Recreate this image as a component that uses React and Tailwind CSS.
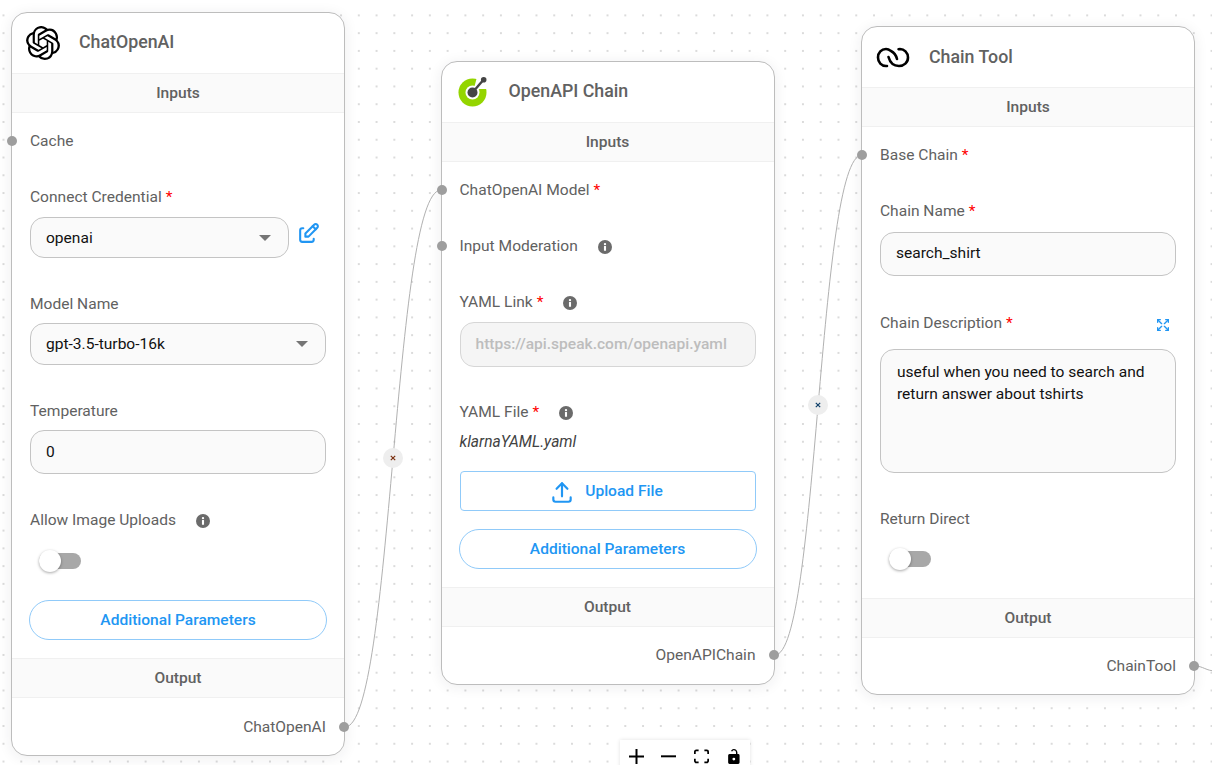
import React from 'react'
import { SiOpenai } from 'react-icons/si'
import { TbEdit, TbUpload, TbArrowsMaximize } from 'react-icons/tb'

function Info({ className }) {
  return (
    <svg viewBox="0 0 24 24" className={className}>
      <circle cx="12" cy="12" r="12" fill="#6b6b6b" />
      <rect x="10.2" y="10.2" width="3.6" height="8.4" rx="0.6" fill="#fff" />
      <circle cx="12" cy="7" r="2" fill="#fff" />
    </svg>
  )
}

function Label({ children, required, info, className = '' }) {
  return (
    <div className={`flex items-center h-5 pt-[2px] text-[15.55px] text-[#616161] ${className}`}>
      <span>{children}</span>
      {required && <span className="ml-[4px] text-[#f00]">*</span>}
      {info && <Info className="w-[14px] h-[14px] ml-5" />}
    </div>
  )
}

function Bar({ children }) {
  return (
    <div className="flex items-center justify-center h-10 pt-[2px] bg-[#fafafa] border-y border-[#f0f0f0] text-[15.55px] font-medium text-[#616161]">
      {children}
    </div>
  )
}

function Handle({ className }) {
  return <div className={`absolute w-[10px] h-[10px] rounded-full bg-[#9e9e9e] ${className}`} />
}

function Select({ value, className = '' }) {
  return (
    <div className={`flex items-center justify-between pl-[15px] pr-[17px] rounded-[14px] bg-[#fafafa] border border-[#c4c4c4] text-[15.55px] text-[#111] ${className}`}>
      <span className="pt-[2px]">{value}</span>
      <span className="w-0 h-0 border-x-[6px] border-x-transparent border-t-[6px] border-t-[#757575]" />
    </div>
  )
}

function TextBox({ value, className = '' }) {
  return (
    <div className={`flex items-center px-[15px] rounded-[14px] bg-[#fafafa] border border-[#c4c4c4] text-[15.55px] text-[#111] ${className}`}>
      {value}
    </div>
  )
}

function Toggle({ className = '' }) {
  return (
    <div className={`relative w-[42px] h-[16px] rounded-full bg-[#a8a8a8] ${className}`}>
      <div className="absolute left-0 top-[-3px] w-[22px] h-[22px] rounded-full bg-white shadow-[0_1px_3px_rgba(0,0,0,0.35)]" />
    </div>
  )
}

function ParamsButton({ className = '' }) {
  return (
    <div className={`flex items-center justify-center h-10 pt-px rounded-full border border-[#90caf9] text-[15.55px] font-medium text-[#2196f3] bg-white ${className}`}>
      Additional Parameters
    </div>
  )
}

function Header({ icon, title, titleClass = 'pb-px' }) {
  return (
    <div className="flex items-center h-[60px] pl-[10px]">
      <div className="flex items-center justify-center w-[42px] h-[42px]">{icon}</div>
      <div className={`ml-[15px] text-[17.78px] font-medium text-[#616161] ${titleClass}`}>{title}</div>
    </div>
  )
}

function Node({ className, children }) {
  return (
    <div className={`absolute w-[334px] bg-white rounded-[16px] border border-[#bdbdbd] shadow-[0_2px_14px_rgba(32,40,45,0.08)] ${className}`}>
      {children}
    </div>
  )
}

function ChainIcon() {
  return (
    <svg viewBox="0 0 34 21" className="w-[34px] h-[21px] -ml-px" fill="none" stroke="#000" strokeWidth="2.6" strokeLinecap="round">
      <path d="M21 12 C20 8 18 5.5 15 4 C13 2.5 11.5 2 10 2 C5.5 2 2 5.5 2 10.5 C2 15.5 5.5 19 10 19 L11 19" />
      <path d="M12.5 10 C14 15.5 18 19 23 19 C28 19 32 15.5 32 10.5 C32 5.5 28 2 24 2 L22.5 2.2" />
    </svg>
  )
}

function OpenApiIcon() {
  return (
    <svg viewBox="0 0 30 30" className="w-[30px] h-[30px]">
      <circle cx="14.5" cy="15.5" r="14" fill="#94d500" />
      <circle cx="14.5" cy="15.5" r="7" fill="#fff" />
      <path d="M19 0 L30 0 L30 12 L21.5 12 L15 15 Z" fill="#fff" />
      <path d="M14.5 15.5 L25.7 2.5" stroke="#454545" strokeWidth="2.4" />
      <circle cx="14.5" cy="15.5" r="5" fill="#454545" />
      <circle cx="25.7" cy="2.8" r="2.8" fill="#454545" />
    </svg>
  )
}

function EdgeBadge({ className, color }) {
  return (
    <div className={`absolute flex items-center justify-center w-5 h-5 rounded-full bg-[#eeeeee] ${className}`}>
      <svg viewBox="0 0 6 6" className="w-[6px] h-[6px]" stroke={color} strokeWidth="1.2">
        <path d="M0.8 0.8 L5.2 5.2 M5.2 0.8 L0.8 5.2" />
      </svg>
    </div>
  )
}

export default function App() {
  return (
    <div className="relative w-[1212px] h-[765px] overflow-hidden bg-white font-['Roboto',sans-serif] bg-[radial-gradient(#d0d0d0_0.6px,transparent_1px)] bg-[size:17.78px_17.78px] bg-[position:-5.4px_6.5px]">
      {/* edges */}
      <svg className="absolute inset-0 w-[1212px] h-[765px]" fill="none" stroke="#b1b1b1" strokeWidth="1">
        <path d="M345 727 C393 727 393 190 441 190" />
        <path d="M775 655 C818 655 818 155 862 155" />
        <path d="M1195 666 C1203 666 1206 671 1216 671" />
      </svg>
      <EdgeBadge className="left-[383px] top-[448px]" color="#7a3010" />
      <EdgeBadge className="left-[808px] top-[395px]" color="#10406a" />

      {/* ChatOpenAI */}
      <Node className="left-[11px] top-[12px] h-[744px]">
        <Header icon={<SiOpenai className="w-[34px] h-[34px] text-black" />} title="ChatOpenAI" />
        <Bar>Inputs</Bar>
        <div className="px-[18px] pt-[18px]">
          <Label>Cache</Label>
          <Label required className="mt-9">Connect Credential</Label>
          <div className="flex items-center mt-[10px]">
            <Select value="openai" className="w-[259px] h-[41px]" />
            <TbEdit className="ml-[7px] mb-[8px] w-[25px] h-[25px] text-[#2196f3]" />
          </div>
          <Label className="mt-[36px]">Model Name</Label>
          <Select value="gpt-3.5-turbo-16k" className="mt-[9px] h-[42px]" />
          <Label className="mt-[36px]">Temperature</Label>
          <TextBox value="0" className="mt-[9px] h-[44px] pt-[2px]" />
          <Label info className="mt-[36px]">Allow Image Uploads</Label>
          <Toggle className="mt-[23px] ml-[9px]" />
          <ParamsButton className="mt-[31px] -mx-px" />
        </div>
        <div className="mt-[18px]"><Bar>Output</Bar></div>
        <div className="flex items-center justify-end h-5 pt-[2px] mt-[19px] px-[18px] text-[15.55px] text-[#616161]">ChatOpenAI</div>
        <Handle className="left-[-5px] top-[123px]" />
        <Handle className="right-[-5px] top-[709px]" />
      </Node>

      {/* OpenAPI Chain */}
      <Node className="left-[440.5px] top-[61px] h-[624px]">
        <Header icon={<OpenApiIcon />} title="OpenAPI Chain" />
        <Bar>Inputs</Bar>
        <div className="px-[18px] pt-[18px]">
          <Label required>ChatOpenAI Model</Label>
          <Label info className="mt-9">Input Moderation</Label>
          <Label required info className="mt-9">YAML Link</Label>
          <div className="flex items-center mt-[10px] h-[45px] px-[15px] rounded-[14px] bg-[#f5f5f5] border border-[#d6d6d6] text-[15.55px] font-medium text-[#bdbdbd]">
            https://api.speak.com/openapi.yaml
          </div>
          <Label required info className="mt-[35px]">YAML File</Label>
          <div className="mt-[10px] h-5 pt-[2px] flex items-center text-[15.55px] italic text-[#424242]">klarnaYAML.yaml</div>
          <div className="flex items-center justify-center mt-[19px] h-10 pt-px pr-[3px] rounded-[4px] border border-[#90caf9] text-[15.55px] font-medium text-[#2196f3]">
            <TbUpload className="w-[26px] h-[26px] mr-[10px]" />
            Upload File
          </div>
          <ParamsButton className="mt-[18px] -mx-px" />
        </div>
        <div className="mt-[18px]"><Bar>Output</Bar></div>
        <div className="flex items-center justify-end h-5 pt-[2px] mt-[18px] px-[18px] text-[15.55px] text-[#616161]">OpenAPIChain</div>
        <Handle className="left-[-5px] top-[123px]" />
        <Handle className="left-[-5px] top-[179px]" />
        <Handle className="right-[-5px] top-[588px]" />
      </Node>

      {/* Chain Tool */}
      <Node className="left-[861px] top-[26px] h-[669px]">
        <Header icon={<ChainIcon />} title="Chain Tool" titleClass="pt-px" />
        <Bar>Inputs</Bar>
        <div className="px-[18px] pt-[18px]">
          <Label required>Base Chain</Label>
          <Label required className="mt-9">Chain Name</Label>
          <TextBox value="search_shirt" className="mt-[11px] h-[44px]" />
          <div className="flex items-center justify-between mt-[36px]">
            <Label required>Chain Description</Label>
            <TbArrowsMaximize className="w-4 h-4 mt-[5px] mr-[5px] text-[#2196f3]" />
          </div>
          <div className="mt-4 h-[124px] px-4 py-[11px] rounded-[14px] bg-[#fafafa] border border-[#c4c4c4] text-[15.55px] leading-[22px] text-[#111]">
            useful when you need to search and return answer about tshirts
          </div>
          <Label className="mt-[36px]">Return Direct</Label>
          <Toggle className="mt-[22px] ml-[9px]" />
        </div>
        <div className="mt-[31px]"><Bar>Output</Bar></div>
        <div className="flex items-center justify-end h-5 pt-[2px] mt-[18px] px-[18px] text-[15.55px] text-[#616161]">ChainTool</div>
        <Handle className="left-[-5px] top-[123px]" />
        <Handle className="right-[-5px] top-[634px]" />
      </Node>

      {/* flow controls */}
      <div className="absolute left-[620px] top-[740px] flex w-[130px] h-8 bg-white shadow-[0_0_4px_rgba(0,0,0,0.12)]">
        <div className="flex items-center justify-center flex-1">
          <svg viewBox="0 0 32 32" className="w-[15px] h-[15px]"><path d="M32 18.133H18.133V32h-4.266V18.133H0v-4.266h13.867V0h4.266v13.867H32z" /></svg>
        </div>
        <div className="flex items-center justify-center flex-1">
          <svg viewBox="0 0 32 5" className="w-[15px] h-[3px]"><path d="M0 0h32v4.2H0z" /></svg>
        </div>
        <div className="flex items-center justify-center flex-1">
          <svg viewBox="0 0 32 30" className="w-[15px] h-[15px]"><path d="M3.692 4.63c0-.53.4-.938.939-.938h5.215V0H4.708C2.13 0 0 2.054 0 4.63v5.216h3.692V4.631zM27.354 0h-5.2v3.692h5.17c.53 0 .984.4.984.939v5.215H32V4.631A4.624 4.624 0 0027.354 0zm.954 24.83c0 .532-.4.94-.939.94h-5.215v3.768h5.215c2.577 0 4.631-2.13 4.631-4.707v-5.139h-3.692v5.139zm-23.677.94c-.531 0-.939-.4-.939-.94v-5.138H0v5.139c0 2.577 2.13 4.707 4.708 4.707h5.138V25.77H4.631z" /></svg>
        </div>
        <div className="flex items-center justify-center flex-1">
          <svg viewBox="0 0 25 32" className="w-[12px] h-[15px]"><path d="M21.333 10.667H19.81V7.619C19.81 3.429 16.38 0 12.19 0c-1.523 0-3.047.458-4.114 1.368-.99.762-1.752 1.905-2.133 3.048l2.895.838c.19-.685.61-1.295 1.143-1.676.686-.533 1.524-.762 2.21-.762 2.437 0 4.57 1.98 4.57 4.571v3.048H3.048A3.056 3.056 0 000 13.714v15.238A3.056 3.056 0 003.048 32h18.285a3.056 3.056 0 003.048-3.048V13.714a3.056 3.056 0 00-3.048-3.047zM12.19 24.533a3.056 3.056 0 01-3.047-3.047 3.056 3.056 0 013.047-3.048 3.056 3.056 0 013.048 3.048 3.056 3.056 0 01-3.048 3.047z" /></svg>
        </div>
      </div>
    </div>
  )
}
